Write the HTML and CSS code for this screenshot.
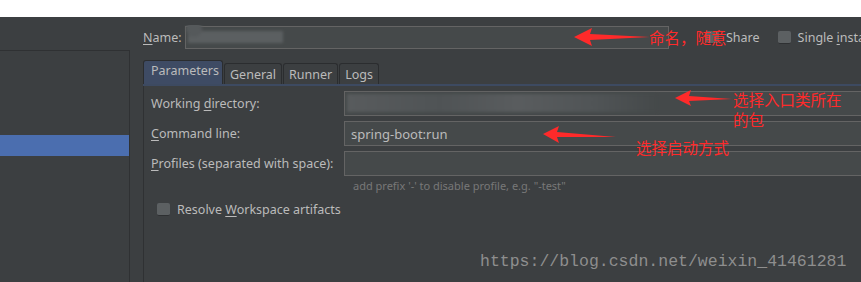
FILE: index.html
```html
<!DOCTYPE html>
<html lang="en">
<head>
  <meta charset="UTF-8" />
  <title>Run Configuration</title>
  <link rel="stylesheet" href="styles.css">
</head>
<body>
  <div class="topbar"></div>

  <div class="main">
    <aside class="sidebar">
      <div class="tree">
        <div class="tree-row selected"></div>
      </div>
    </aside>

    <section class="config">
      <div class="name-row">
        <label class="name-label"><u>N</u>ame:</label>
        <div class="field name-field">
          <span class="blur blur-name"></span>
        </div>
        <label class="check share"><span class="box"></span><span>Share</span></label>
        <label class="check single"><span class="box"></span><span>Single <u>i</u>nstance only</span></label>
      </div>

      <div class="tabs">
        <div class="tab active">Parameters</div>
        <div class="tab">General</div>
        <div class="tab">Runner</div>
        <div class="tab">Logs</div>
      </div>

      <div class="panel">
        <div class="row">
          <span class="label">Working <u>d</u>irectory:</span>
          <div class="field"><span class="blur blur-dir"></span></div>
        </div>
        <div class="row">
          <span class="label"><u>C</u>ommand line:</span>
          <div class="field">spring-boot:run</div>
        </div>
        <div class="row">
          <span class="label"><u>P</u>rofiles (separated with space):</span>
          <div class="field"></div>
        </div>
        <div class="hint">add prefix '-' to disable profile, e.g. "-test"</div>
        <label class="check resolve"><span class="box"></span><span>Resolve <u>W</u>orkspace artifacts</span></label>
      </div>
    </section>
  </div>

  <!-- red notes drawn over the screenshot -->
  <svg class="arrows" width="861" height="282" viewBox="0 0 861 282">
    <polygon points="574,37 592,28 590,34 650,37 590,40 592,46" />
    <polygon points="675,98 691,90 689,96 732,99 689,101 691,106" />
    <polygon points="543,134 559,126 557,132 616,137 557,137 559,143" />
  </svg>
  <div class="note note-name">命名，随意</div>
  <div class="note note-dir">选择入口类所在<br>的包</div>
  <div class="note note-cmd">选择启动方式</div>

  <div class="watermark">https://blog.csdn.net/weixin_41461281</div>
</body>
</html>
```

FILE: styles.css
```css
body {
  margin: 0;
  width: 861px;
  height: 282px;
  overflow: hidden;
  background: #3c3f41;
  color: #bbbbbb;
  font-family: 'Noto Sans', 'Liberation Sans', sans-serif;
  font-size: 12.5px;
  position: relative;
}
u {
  text-decoration-thickness: 1px;
  text-underline-offset: 2px;
}
.topbar {
  height: 17px;
  background: #ffffff;
}
.main {
  display: flex;
  height: 265px;
}

/* left tree */
.sidebar {
  width: 130px;
  flex: none;
  padding-top: 33px;
}
.tree {
  height: 100%;
  border-top: 1px solid #2f3133;
  border-right: 1px solid #2f3133;
  padding-top: 84px;
  box-sizing: border-box;
}
.tree-row.selected {
  height: 21px;
  background: #4b6eaf;
}

/* right side */
.config {
  flex: 1;
  margin-left: 13px;
  min-width: 0;
}
.name-row {
  display: flex;
  align-items: center;
  height: 24px;
  margin-top: 8px;
  white-space: nowrap;
  overflow: hidden;
}
.name-label {
  width: 42px;
  flex: none;
}
.field {
  position: relative;
  height: 23px;
  border: 1px solid #646464;
  background: #45494a;
  box-sizing: border-box;
  display: flex;
  align-items: center;
  padding-left: 6px;
  color: #bbbbbb;
  font-size: 13px;
}
.name-field {
  width: 484px;
  flex: none;
}
.blur {
  position: absolute;
  filter: blur(1.5px);
}
.blur-name {
  left: 2px;
  top: 4px;
  width: 95px;
  height: 12px;
  background: #5b5f61;
}
.blur-name::before {
  content: '';
  position: absolute;
  left: -2px;
  top: -10px;
  width: 16px;
  height: 16px;
  border-radius: 50%;
  background: #55595b;
}
.blur-dir {
  left: 2px;
  top: 2px;
  width: 310px;
  height: 18px;
  background: linear-gradient(90deg, #585b5d, #4f5355 30%, #595c5e 55%, #505456 80%, #45494a);
}

.check {
  display: flex;
  align-items: center;
  gap: 7px;
  flex: none;
}
.box {
  width: 13px;
  height: 13px;
  border-radius: 2px;
  background: #5c6062;
  border-bottom: 1px solid #2e3032;
  box-sizing: border-box;
}
.share {
  margin-left: 37px;
}
.single {
  margin-left: 18px;
}

/* tabs */
.tabs {
  display: flex;
  align-items: flex-end;
  margin-top: 11px;
  height: 24px;
  border-bottom: 2px solid #3d4a61;
  font-size: 12.5px;
}
.tab {
  height: 21px;
  padding: 0 5px;
  border: 1px solid #2b2d2f;
  border-bottom: none;
  border-radius: 3px 3px 0 0;
  display: flex;
  align-items: center;
  box-sizing: border-box;
  margin-right: 1px;
}
.tab.active {
  height: 24px;
  padding: 0 7px;
  background: #3e4b64;
  border-color: #2b2d2f;
  align-items: flex-start;
  padding-top: 1px;
  width: 80px;
}

/* form panel */
.panel {
  border-left: 1px solid #2f3133;
  height: 200px;
  padding: 5px 0 0 7px;
}
.row {
  display: flex;
  align-items: center;
  height: 25px;
  margin-bottom: 5px;
}
.label {
  width: 193px;
  flex: none;
}
.row .field {
  width: 540px;
  flex: none;
  height: 25px;
}
.hint {
  margin: -3px 0 0 202px;
  font-size: 11px;
  color: #787878;
}
.resolve {
  margin: 8px 0 0 6px;
}

/* annotations */
.arrows {
  position: absolute;
  left: 0;
  top: 0;
  fill: #ff2a2a;
}
.note {
  position: absolute;
  color: #ff2a2a;
  font-family: 'Noto Sans CJK SC', sans-serif;
  font-size: 15.5px;
  line-height: 20px;
}
.note-name {
  left: 649px;
  top: 27px;
}
.note-dir {
  left: 733px;
  top: 89px;
}
.note-cmd {
  left: 636px;
  top: 137px;
}
.watermark {
  position: absolute;
  left: 480px;
  top: 252px;
  color: #8e8e8e;
  font-family: 'Liberation Mono', monospace;
  font-size: 16.5px;
}
```
